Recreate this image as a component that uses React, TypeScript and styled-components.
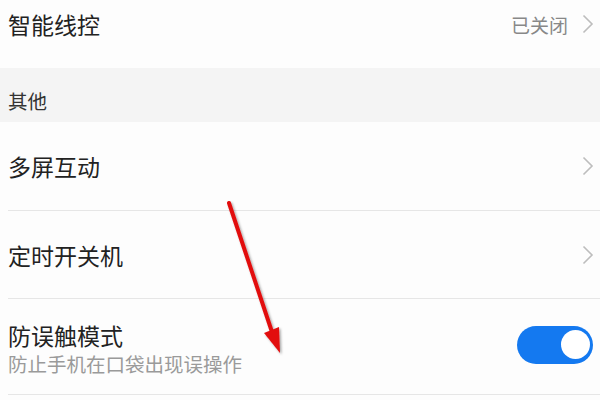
import React from "react";
import styled, { createGlobalStyle } from "styled-components";

const Global = createGlobalStyle`
  html, body { margin: 0; padding: 0; background: #fdfdfd; }
  body { font-family: "Noto Sans CJK SC", "Noto Sans", sans-serif; }
`;

const Screen = styled.div`
  position: relative;
  width: 600px;
  height: 400px;
  overflow: hidden;
  background: #fdfdfd;
`;

const Scroller = styled.div`
  display: flex;
  flex-direction: column;
  margin-top: -20px;
`;

const Row = styled.div<{ $h: number; $divider?: boolean; $shift?: number }>`
  display: flex;
  align-items: center;
  height: ${(p) => p.$h}px;
  margin-left: 8px;
  padding-right: 6px;
  padding-top: ${(p) => p.$shift ?? 0}px;
  box-sizing: border-box;
  border-bottom: ${(p) => (p.$divider ? "1px solid #e6e6e6" : "none")};
`;

const TextCol = styled.div`
  flex: 1;
  display: flex;
  flex-direction: column;
`;

const Title = styled.div`
  font-size: 23px;
  line-height: 30px;
  color: #222;
`;

const Sub = styled.div`
  font-size: 19.5px;
  line-height: 27px;
  color: #9a9a9a;
`;

const Value = styled.span`
  font-size: 19px;
  color: #888;
  margin-right: 14px;
`;

const Section = styled.div`
  height: 54px;
  background: #f4f4f4;
  display: flex;
  align-items: center;
  padding-left: 8px;
  padding-top: 10px;
  box-sizing: border-box;
  font-size: 19.5px;
  color: #333;
`;

const Toggle = styled.div<{ $on: boolean }>`
  width: 76px;
  height: 38px;
  border-radius: 19px;
  background: ${(p) => (p.$on ? "#1479f0" : "#ccc")};
  display: flex;
  align-items: center;
  justify-content: ${(p) => (p.$on ? "flex-end" : "flex-start")};
  padding: 0 3px;
  box-sizing: border-box;
  margin-right: 1px;
  margin-top: -8px;
`;

const Knob = styled.div`
  width: 29px;
  height: 29px;
  border-radius: 50%;
  background: #fff;
`;

const Overlay = styled.svg`
  position: absolute;
  left: 0;
  top: 0;
  pointer-events: none;
`;

const Chevron = () => (
  <svg width="12" height="20" viewBox="0 0 12 20">
    <path d="M1.5 1.5 L10 10 L1.5 18.5" fill="none" stroke="#bdbdbd" strokeWidth="1.6" />
  </svg>
);

export default function App() {
  return (
    <Screen>
      <Global />
      <Scroller>
        <Row $h={88}>
          <TextCol>
            <Title>智能线控</Title>
          </TextCol>
          <Value>已关闭</Value>
          <Chevron />
        </Row>
        <Section>其他</Section>
        <Row $h={89} $divider>
          <TextCol>
            <Title>多屏互动</Title>
          </TextCol>
          <Chevron />
        </Row>
        <Row $h={88} $divider>
          <TextCol>
            <Title>定时开关机</Title>
          </TextCol>
          <Chevron />
        </Row>
        <Row $h={96} $divider $shift={4}>
          <TextCol>
            <Title>防误触模式</Title>
            <Sub>防止手机在口袋出现误操作</Sub>
          </TextCol>
          <Toggle $on>
            <Knob />
          </Toggle>
        </Row>
      </Scroller>
      <Overlay width="600" height="400" viewBox="0 0 600 400">
        <defs>
          <filter id="sh" x="-50%" y="-50%" width="200%" height="200%">
            <feDropShadow dx="1.5" dy="1.5" stdDeviation="1.2" floodColor="#000" floodOpacity="0.35" />
          </filter>
        </defs>
        <g filter="url(#sh)">
          <line x1="229" y1="203" x2="273" y2="335" stroke="#e20e0e" strokeWidth="4" strokeLinecap="round" />
          <polygon points="280,353 264,333 279,327" fill="#e20e0e" />
        </g>
      </Overlay>
    </Screen>
  );
}
